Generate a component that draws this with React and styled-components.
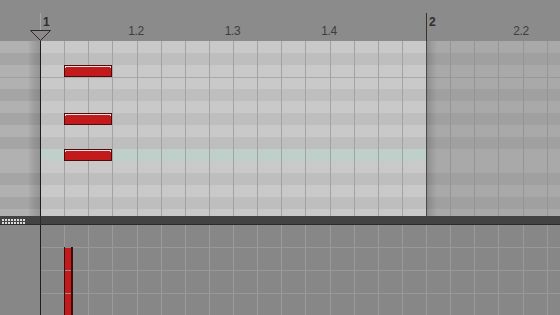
import React from 'react';
import styled, { createGlobalStyle } from 'styled-components';

// 12px piano-roll rows, top to bottom (L = white key, D = black key, T = highlighted row)
const ROWS = ['L', 'D', 'L', 'L', 'D', 'L', 'D', 'L', 'D', 'T', 'L', 'D', 'L', 'D', 'L'];
const ROW_H = 12;
const STEP = 24.125; // one sixteenth in px

const rowBackground = (pal) => {
  const stops = ROWS.map((k, i) => `${pal[k] || pal.L} ${i * ROW_H}px ${(i + 1) * ROW_H}px`);
  const octave = `linear-gradient(to bottom, transparent 36px, ${pal.line} 36px 37px, transparent 37px)`;
  return `${octave}, linear-gradient(to bottom, ${stops.join(', ')})`;
};

const CLIP = { L: '#c9c9c9', D: '#bebebe', T: '#bed0c9', line: '#a9a9a9' };
const OUT = { L: '#a9a9a9', D: '#a0a0a0', line: '#979797' };
const KEYS = { L: '#b1b1b1', D: '#a5a5a5', line: '#a0a0a0' };

const GlobalStyle = createGlobalStyle`
  html, body { margin: 0; padding: 0; background: #878787; }
  body { font-family: "Liberation Sans", Arial, sans-serif; overflow: hidden; }
`;

const Screen = styled.div`
  width: 560px;
  height: 315px;
  overflow: hidden;
  display: flex;
  flex-direction: column;
  background: #878787;
`;

// 상단 눈금자
const Ruler = styled.div`
  position: relative;
  height: 41px;
  flex: none;
  background: #8b8b8b;
`;

const RulerTick = styled.div`
  position: absolute;
  left: ${p => p.$x}px;
  top: 13px;
  width: 1px;
  height: ${p => p.$h}px;
  background: ${p => p.$color};
`;

const BarLabel = styled.span`
  position: absolute;
  left: ${p => p.$x}px;
  top: 16px;
  font-size: 12px;
  line-height: 12px;
  font-weight: bold;
  color: #2e2e2e;
`;

const BeatLabel = styled.span`
  position: absolute;
  left: ${p => p.$x}px;
  top: 25px;
  transform: translateX(-50%);
  font-size: 12px;
  line-height: 12px;
  letter-spacing: -0.4px;
  color: #3d3d3d;
`;

const Marker = styled.svg`
  position: absolute;
  left: 29px;
  top: 29px;
`;

// 노트 편집 영역
const Editor = styled.div`
  display: flex;
  height: 175px;
  flex: none;
`;

const KeyPanel = styled.div`
  width: 40px;
  flex: none;
  background-image: linear-gradient(90deg, transparent 28px, rgba(0, 0, 0, 0.06) 31px, rgba(0, 0, 0, 0.12) 36px, rgba(0, 0, 0, 0.16) 40px),
    ${rowBackground(KEYS)};
`;

const Clip = styled.div`
  position: relative;
  width: 386px;
  flex: none;
  display: flex;
  background-image: ${rowBackground(CLIP)};
`;

const Outside = styled.div`
  flex: 1;
  display: flex;
  overflow: hidden;
  background-image: linear-gradient(90deg, rgba(0, 0, 0, 0.2) 0, rgba(0, 0, 0, 0.1) 4px, rgba(0, 0, 0, 0.03) 9px, transparent 12px),
    ${rowBackground(OUT)};
`;

const Col = styled.div`
  box-sizing: border-box;
  flex: ${p => (p.$fixed ? `0 0 ${STEP}px` : '1 1 0')};
  border-left: 1px solid ${p => p.$line};
`;

const Note = styled.div`
  position: absolute;
  left: ${p => p.$x}px;
  top: ${p => p.$y}px;
  width: 48px;
  height: 12px;
  box-sizing: border-box;
  border: 1px solid #4e0b0b;
  background: #c31a1b;

  &::before {
    content: '';
    position: absolute;
    left: 0;
    right: 0;
    top: 0;
    height: 2px;
    box-sizing: border-box;
    border: 1px solid #f2e2e2;
    border-bottom: none;
  }
`;

// 구분 막대
const Splitter = styled.div`
  height: 8px;
  flex: none;
  display: flex;
  background: #434343;
  border-bottom: 1px solid #2a2a2a;
`;

const Grip = styled.div`
  width: 40px;
  flex: none;
  box-sizing: border-box;
  padding: 3px 0 0 2px;
  display: grid;
  grid-template-columns: repeat(8, 2px);
  grid-auto-rows: 2px;
  gap: 1px;
  align-content: start;
`;

const Dot = styled.span`
  background: #dcdcdc;
`;

const SplitRest = styled.div`
  flex: 1;
  border-left: 1px solid #2c2c2c;
`;

// 벨로시티 영역
const Velocity = styled.div`
  flex: 1;
  display: flex;
`;

const VelKeys = styled.div`
  width: 40px;
  flex: none;
  background: #878787;
`;

const VelLane = styled.div`
  position: relative;
  flex: 1;
  display: flex;
  overflow: hidden;
  background-color: #878787;
  background-image: linear-gradient(to bottom, transparent 22px, #999 22px 23px, transparent 23px 45px, #999 45px 46px, transparent 46px 68px, #999 68px 69px, transparent 69px);
`;

const VelBar = styled.div`
  position: absolute;
  left: ${p => p.$x}px;
  top: 22px;
  bottom: 0;
  width: 9px;
  box-sizing: border-box;
  border-left: 1px solid #3c0d0d;
  border-right: 2px solid #3c0d0d;
  background-image: linear-gradient(to bottom, #8e8e8e 0 1px, transparent 1px 23px, #8e8e8e 23px 24px, transparent 24px 46px, #8e8e8e 46px 47px, transparent 47px);
  background-color: #c31a1b;
`;

const notes = [
  { x: 24, y: 24 },
  { x: 24, y: 72 },
  { x: 24, y: 108 },
];

const beats = [
  { label: '1.2', x: 136 },
  { label: '1.3', x: 232.5 },
  { label: '1.4', x: 329 },
  { label: '2.2', x: 521 },
];

const range = (n) => Array.from({ length: n }, (_, i) => i);

const App = () => (
  <Screen>
    <GlobalStyle />
    <Ruler>
      <RulerTick $x={40} $h={17} $color="#a6a6a6" />
      <RulerTick $x={426} $h={28} $color="#333" />
      <BarLabel $x={43}>1</BarLabel>
      <BarLabel $x={429}>2</BarLabel>
      {beats.map(b => (
        <BeatLabel key={b.label} $x={b.x}>{b.label}</BeatLabel>
      ))}
      <Marker width="23" height="13" viewBox="0 0 23 13">
        <polygon points="1.5,1.5 21.5,1.5 11.5,11.5" fill="#8f8888" stroke="#2b2b2b" strokeWidth="1" />
      </Marker>
    </Ruler>

    <Editor>
      <KeyPanel />
      <Clip>
        {range(16).map(i => (
          <Col key={i} $line={i === 0 ? '#1e1e1e' : '#a3a3a3'} />
        ))}
        {notes.map((n, i) => (
          <Note key={i} $x={n.x} $y={n.y} />
        ))}
      </Clip>
      <Outside>
        {range(6).map(i => (
          <Col key={i} $fixed $line={i === 0 ? '#4a4a4a' : '#959595'} />
        ))}
      </Outside>
    </Editor>

    <Splitter>
      <Grip>
        {range(16).map(i => <Dot key={i} />)}
      </Grip>
      <SplitRest />
    </Splitter>

    <Velocity>
      <VelKeys />
      <VelLane>
        {range(22).map(i => (
          <Col key={i} $fixed $line={i === 0 ? '#1e1e1e' : '#9a9a9a'} />
        ))}
        <VelBar $x={24} />
      </VelLane>
    </Velocity>
  </Screen>
);

export default App;
